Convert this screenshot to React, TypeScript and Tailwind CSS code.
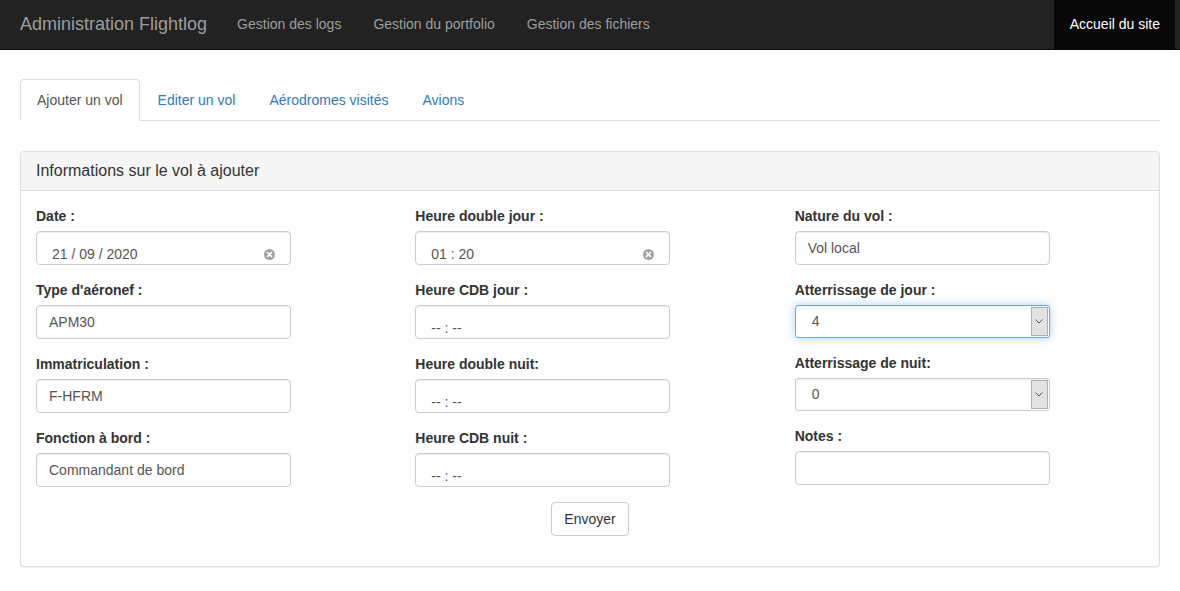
import React from "react";

const inputBase =
  "h-[34px] w-[255px] rounded-[4px] border border-[#ccc] bg-white px-[12px] text-[14px] text-[#555] shadow-[inset_0_1px_1px_rgba(0,0,0,0.075)] outline-none";

function Label({ children }: { children: React.ReactNode }) {
  return <label className="mb-[5px] block text-[14px] font-bold leading-[20px] text-[#333]">{children}</label>;
}

function TextField({ label, value }: { label: string; value: string }) {
  return (
    <div className="mb-[15px]">
      <Label>{label}</Label>
      <input readOnly defaultValue={value} className={inputBase} />
    </div>
  );
}

function ClearIcon() {
  return (
    <svg width="11" height="11" viewBox="0 0 11 11">
      <circle cx="5.5" cy="5.5" r="5.5" fill="#a3a3a3" />
      <path d="M3.5 3.5l4 4M7.5 3.5l-4 4" stroke="#fff" strokeWidth="1.6" strokeLinecap="round" />
    </svg>
  );
}

// fake date / time field, the native one renders differently
function PickerField({ label, value, clear }: { label: string; value: string; clear?: boolean }) {
  return (
    <div className="mb-[15px]">
      <Label>{label}</Label>
      <div className="flex h-[34px] w-[255px] items-start justify-between overflow-hidden rounded-[4px] border border-[#ccc] bg-white pl-[15px] pr-[15px] pt-[12px] shadow-[inset_0_1px_1px_rgba(0,0,0,0.075)]">
        <span className="text-[14px] leading-[20px] text-[#555]">{value}</span>
        {clear && (
          <span className="mt-[5px]">
            <ClearIcon />
          </span>
        )}
      </div>
    </div>
  );
}

function SelectField({ label, value, focus }: { label: string; value: string; focus?: boolean }) {
  return (
    <div className="mb-[15px]">
      <Label>{label}</Label>
      <div
        className={
          focus
            ? "flex h-[33px] w-[255px] items-stretch rounded-[3px] border border-[#66afe9] bg-white p-px shadow-[inset_0_1px_1px_rgba(0,0,0,0.075),0_0_8px_rgba(102,175,233,0.6)]"
            : "flex h-[33px] w-[255px] items-stretch rounded-[3px] border border-[#ccc] bg-white p-px shadow-[inset_0_1px_1px_rgba(0,0,0,0.075)]"
        }
      >
        <span className="flex flex-1 items-center pl-[15px] text-[14px] text-[#555]">{value}</span>
        <span className="flex w-[17px] items-center justify-center border border-[#b0b0b0] bg-[#e3e3e3]">
          <svg width="8" height="5" viewBox="0 0 8 5">
            <path d="M0.5 0.5L4 4L7.5 0.5" stroke="#555" strokeWidth="1" fill="none" />
          </svg>
        </span>
      </div>
    </div>
  );
}

export default function App() {
  return (
    <div className="min-h-[591px] bg-white font-['Liberation_Sans',Arial,sans-serif] text-[14px] text-[#333]">
      {/* Navbar */}
      <nav className="flex h-[50px] items-stretch border-b border-[#080808] bg-[#222] pl-[5px] pr-[5px]">
        <div className="flex items-center pl-[15px] pr-[14px] text-[18px] text-[#9d9d9d]">Administration Flightlog</div>
        <ul className="flex items-stretch">
          {["Gestion des logs", "Gestion du portfolio", "Gestion des fichiers"].map((l) => (
            <li key={l} className="flex items-center px-[16px] text-[#9d9d9d]">
              {l}
            </li>
          ))}
        </ul>
        <div className="ml-auto flex items-center bg-[#080808] px-[15px] pl-[16px] text-white">Accueil du site</div>
      </nav>

      <div className="px-[20px] pt-[29px]">
        {/* Tabs */}
        <ul className="flex border-b border-[#ddd]">
          <li className="-mb-px mr-[2px] rounded-t-[4px] border border-[#ddd] border-b-white bg-white px-[16px] py-[10px] leading-[20px] text-[#555]">
            Ajouter un vol
          </li>
          {["Editer un vol", "Aérodromes visités", "Avions"].map((t) => (
            <li key={t} className="-mb-px mr-[2px] border border-transparent px-[15px] py-[10px] leading-[20px] text-[#337ab7]">
              {t}
            </li>
          ))}
        </ul>

        {/* Panel */}
        <div className="mt-[30px] rounded-[4px] border border-[#ddd] bg-white shadow-[0_1px_1px_rgba(0,0,0,0.05)]">
          <div className="rounded-t-[3px] border-b border-[#ddd] bg-[#f5f5f5] px-[15px] py-[10px] text-[16px] leading-[18px] text-[#333]">
            Informations sur le vol à ajouter
          </div>
          <div className="p-[15px]">
            <div className="-mx-[15px] grid grid-cols-3">
              <div className="px-[15px]">
                <PickerField label="Date :" value="21 / 09 / 2020" clear />
                <TextField label="Type d'aéronef :" value="APM30" />
                <TextField label="Immatriculation :" value="F-HFRM" />
                <TextField label="Fonction à bord :" value="Commandant de bord" />
              </div>
              <div className="px-[15px]">
                <PickerField label="Heure double jour :" value="01 : 20" clear />
                <PickerField label="Heure CDB jour :" value="-- : --" />
                <PickerField label="Heure double nuit:" value="-- : --" />
                <PickerField label="Heure CDB nuit :" value="-- : --" />
              </div>
              <div className="px-[15px]">
                <TextField label="Nature du vol :" value="Vol local" />
                <SelectField label="Atterrissage de jour :" value="4" focus />
                <SelectField label="Atterrissage de nuit:" value="0" />
                <TextField label="Notes :" value="" />
              </div>
            </div>
            <div className="mb-[15px] flex justify-center">
              <button className="h-[34px] rounded-[4px] border border-[#ccc] bg-white px-[12px] text-[14px] leading-[20px] text-[#333]">
                Envoyer
              </button>
            </div>
          </div>
        </div>
      </div>
    </div>
  );
}
